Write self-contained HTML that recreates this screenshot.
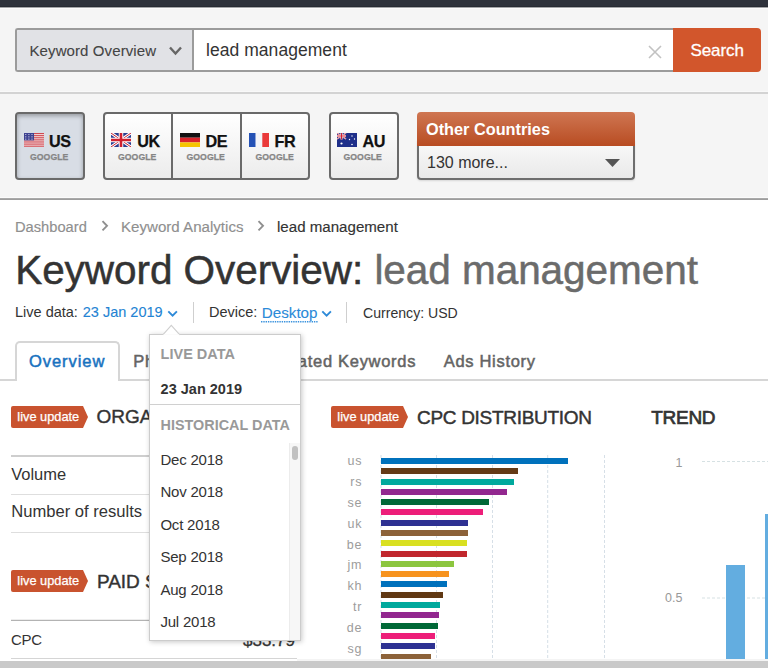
<!DOCTYPE html>
<html><head><meta charset="utf-8"><style>
html,body{margin:0;padding:0;width:768px;height:668px;overflow:hidden;background:#fff;font-family:"Liberation Sans", sans-serif;}
.b{position:absolute;}
.t{position:absolute;white-space:nowrap;line-height:1;font-family:"Liberation Sans", sans-serif;}
svg{display:block;}
</style></head><body>
<div class="b" style="left:0px;top:0px;width:768px;height:7px;background:#2e323b;"></div>
<div class="b" style="left:0px;top:6px;width:768px;height:1px;background:#272b33;"></div>
<div class="b" style="left:0px;top:7px;width:768px;height:86px;background:#f5f5f5;"></div>
<div class="b" style="left:0px;top:7px;width:768px;height:1px;background:#a4a5a8;"></div>
<div class="b" style="left:0px;top:8px;width:768px;height:1px;background:#fbfbfb;"></div>
<div class="b" style="left:0px;top:91px;width:768px;height:1px;background:#f9f9f9;"></div>
<div class="b" style="left:0px;top:92px;width:768px;height:2px;background:#d3d3d3;"></div>
<div class="b" style="left:15px;top:28px;width:659px;height:44px;background:#fff;border:2px solid #9b9b9b;border-right:none;border-radius:3px 0 0 3px;box-sizing:border-box;"></div>
<div class="b" style="left:17px;top:30px;width:175px;height:40px;background:#e1e2e6;border-radius:2px 0 0 2px;"></div>
<div class="b" style="left:192px;top:30px;width:2px;height:40px;background:#9b9b9b;"></div>
<div class="b" style="left:673px;top:28px;width:88px;height:44px;background:#d2562c;border-radius:0 4px 4px 0;"></div>
<div class="t" style="left:29.5px;top:42.70px;font-size:15px;color:#444;font-weight:400;letter-spacing:0.1px;-webkit-text-stroke:0.1px #444;">Keyword Overview</div>
<svg class="b" style="left:168px;top:45px" width="16" height="12" viewBox="0 0 16 12"><path d="M2 2.5 L7.5 8.5 L13 2.5" fill="none" stroke="#666" stroke-width="2.4"/></svg>
<div class="t" style="left:206px;top:41.58px;font-size:17.5px;color:#333;font-weight:400;letter-spacing:0.05px;">lead management</div>
<svg class="b" style="left:647px;top:44px" width="16" height="16" viewBox="0 0 16 16"><path d="M2 2 L14 14 M14 2 L2 14" fill="none" stroke="#c2c2c2" stroke-width="1.6"/></svg>
<div class="t" style="left:690.5px;top:42.11px;font-size:17px;color:#fff;font-weight:400;letter-spacing:-0.1px;-webkit-text-stroke:0.3px #fff;">Search</div>
<div class="b" style="left:0px;top:94px;width:768px;height:104px;background:#f5f5f5;"></div>
<div class="b" style="left:0px;top:197px;width:768px;height:1px;background:#fbfbfb;"></div>
<div class="b" style="left:0px;top:198px;width:768px;height:1px;background:#a9a9a9;"></div>
<div class="b" style="left:0px;top:199px;width:768px;height:1px;background:#9d9d9d;"></div>
<div class="b" style="left:15px;top:112px;width:70px;height:68px;background:#d8dde5;box-shadow:inset 0 2px 4px rgba(0,0,0,0.3);border:2px solid #6a6a6a;box-sizing:border-box;border-radius:4px;"></div>
<div class="b" style="left:24px;top:133px"><svg width="20" height="14" viewBox="0 0 20 14"><rect width="20" height="14" fill="#f6e9ea"/><rect x="0" y="0.00" width="20" height="1.15" fill="#cf4850"/><rect x="0" y="2.10" width="20" height="1.15" fill="#cf4850"/><rect x="0" y="4.20" width="20" height="1.15" fill="#cf4850"/><rect x="0" y="6.30" width="20" height="1.15" fill="#cf4850"/><rect x="0" y="8.40" width="20" height="1.15" fill="#cf4850"/><rect x="0" y="10.50" width="20" height="1.15" fill="#cf4850"/><rect x="0" y="12.60" width="20" height="1.15" fill="#cf4850"/><rect x="0" y="0" width="10" height="7.4" fill="#3f4392"/><circle cx="1.80" cy="1.50" r="0.6" fill="#e6e6f4"/><circle cx="4.90" cy="1.50" r="0.6" fill="#e6e6f4"/><circle cx="8.00" cy="1.50" r="0.6" fill="#e6e6f4"/><circle cx="1.80" cy="3.80" r="0.6" fill="#e6e6f4"/><circle cx="4.90" cy="3.80" r="0.6" fill="#e6e6f4"/><circle cx="8.00" cy="3.80" r="0.6" fill="#e6e6f4"/><circle cx="1.80" cy="6.10" r="0.6" fill="#e6e6f4"/><circle cx="4.90" cy="6.10" r="0.6" fill="#e6e6f4"/><circle cx="8.00" cy="6.10" r="0.6" fill="#e6e6f4"/></svg></div>
<div class="t" style="left:49px;top:132.58px;font-size:16.2px;color:#111;font-weight:700;letter-spacing:-0.4px;-webkit-text-stroke:0.25px #111;">US</div>
<div class="t" style="left:30px;top:153.13px;font-size:8.7px;color:#858585;font-weight:700;letter-spacing:0.05px;-webkit-text-stroke:0.25px #858585;">GOOGLE</div>
<div class="b" style="left:103px;top:112px;width:207px;height:68px;background:linear-gradient(#ffffff,#ececec);border:2px solid #6a6a6a;box-sizing:border-box;border-radius:4px;"></div>
<div class="b" style="left:171px;top:113px;width:2px;height:66px;background:#6a6a6a;"></div>
<div class="b" style="left:240px;top:113px;width:2px;height:66px;background:#6a6a6a;"></div>
<div class="b" style="left:111px;top:133px"><svg width="20" height="14" viewBox="0 0 20 14"><rect width="20" height="14" fill="#2c3d8f"/><path d="M0 0 L20 14 M20 0 L0 14" stroke="#fff" stroke-width="3"/><path d="M0 0 L20 14 M20 0 L0 14" stroke="#c8202f" stroke-width="1"/><path d="M10 0 V14 M0 7 H20" stroke="#fff" stroke-width="4.5"/><path d="M10 0 V14 M0 7 H20" stroke="#d0202f" stroke-width="2.6"/></svg></div>
<div class="t" style="left:137.3px;top:132.58px;font-size:16.2px;color:#111;font-weight:700;letter-spacing:-0.4px;-webkit-text-stroke:0.25px #111;">UK</div>
<div class="t" style="left:118px;top:153.13px;font-size:8.7px;color:#858585;font-weight:700;letter-spacing:0.05px;-webkit-text-stroke:0.25px #858585;">GOOGLE</div>
<div class="b" style="left:180px;top:133px"><svg width="20" height="14" viewBox="0 0 20 14"><rect y="0" width="20" height="4.7" fill="#111"/><rect y="4.7" width="20" height="4.7" fill="#d8232a"/><rect y="9.4" width="20" height="4.6" fill="#f5c400"/></svg></div>
<div class="t" style="left:205.5px;top:132.58px;font-size:16.2px;color:#111;font-weight:700;letter-spacing:-0.4px;-webkit-text-stroke:0.25px #111;">DE</div>
<div class="t" style="left:186.5px;top:153.13px;font-size:8.7px;color:#858585;font-weight:700;letter-spacing:0.05px;-webkit-text-stroke:0.25px #858585;">GOOGLE</div>
<div class="b" style="left:249px;top:133px"><svg width="20" height="14" viewBox="0 0 20 14"><rect x="0" width="6.7" height="14" fill="#2451b5"/><rect x="6.7" width="6.6" height="14" fill="#f4f4f8"/><rect x="13.3" width="6.7" height="14" fill="#ea3a3a"/></svg></div>
<div class="t" style="left:274.5px;top:132.58px;font-size:16.2px;color:#111;font-weight:700;letter-spacing:-0.4px;-webkit-text-stroke:0.25px #111;">FR</div>
<div class="t" style="left:255.5px;top:153.13px;font-size:8.7px;color:#858585;font-weight:700;letter-spacing:0.05px;-webkit-text-stroke:0.25px #858585;">GOOGLE</div>
<div class="b" style="left:329px;top:112px;width:70px;height:68px;background:linear-gradient(#ffffff,#ececec);border:2px solid #6a6a6a;box-sizing:border-box;border-radius:4px;"></div>
<div class="b" style="left:337px;top:133px"><svg width="20" height="14" viewBox="0 0 20 14"><rect width="20" height="14" fill="#1f2f8a"/><path d="M0 0 L9 6 M9 0 L0 6" stroke="#fff" stroke-width="1.4"/><path d="M0 0 L9 6 M9 0 L0 6" stroke="#d02030" stroke-width="0.6"/><path d="M4.5 0 V6.5 M0 3 H9" stroke="#fff" stroke-width="2"/><path d="M4.5 0 V6.5 M0 3 H9" stroke="#d02030" stroke-width="1.1"/><circle cx="4.5" cy="10.5" r="1.1" fill="#fff"/><circle cx="15" cy="3" r="0.7" fill="#fff"/><circle cx="12.5" cy="6.5" r="0.7" fill="#fff"/><circle cx="17.5" cy="6" r="0.7" fill="#fff"/><circle cx="15" cy="11.5" r="0.8" fill="#fff"/></svg></div>
<div class="t" style="left:362.5px;top:132.58px;font-size:16.2px;color:#111;font-weight:700;letter-spacing:-0.4px;-webkit-text-stroke:0.25px #111;">AU</div>
<div class="t" style="left:343.5px;top:153.13px;font-size:8.7px;color:#858585;font-weight:700;letter-spacing:0.05px;-webkit-text-stroke:0.25px #858585;">GOOGLE</div>
<div class="b" style="left:417px;top:140px;width:218px;height:40px;background:linear-gradient(#fafafa,#e9e9e9);border:2px solid #6e6e6e;border-top:none;box-sizing:border-box;border-radius:0 0 4px 4px;box-shadow:0 1px 2px rgba(0,0,0,0.12);"></div>
<div class="b" style="left:417px;top:112px;width:218px;height:34px;background:linear-gradient(#cf7652,#b84c22);border-radius:4px 4px 0 0;"></div>
<div class="t" style="left:426px;top:120.60px;font-size:16.3px;color:#fff;font-weight:700;">Other Countries</div>
<div class="t" style="left:427px;top:155.15px;font-size:16px;color:#333;font-weight:400;">130 more...</div>
<svg class="b" style="left:604px;top:158px" width="17" height="10" viewBox="0 0 17 10"><path d="M1 1 H16 L8.5 9 Z" fill="#555"/></svg>
<div class="t" style="left:15px;top:219.55px;font-size:14.7px;color:#8f8f8f;font-weight:400;-webkit-text-stroke:0.15px #8f8f8f;">Dashboard</div>
<svg class="b" style="left:100px;top:219px" width="10" height="14" viewBox="0 0 10 14"><path d="M2.5 2.2 L7 6.8 L2.5 11.4" fill="none" stroke="#8f8f8f" stroke-width="1.9"/></svg>
<div class="t" style="left:121px;top:219.01px;font-size:15.1px;color:#8f8f8f;font-weight:400;-webkit-text-stroke:0.15px #8f8f8f;">Keyword Analytics</div>
<svg class="b" style="left:256px;top:219px" width="10" height="14" viewBox="0 0 10 14"><path d="M2.5 2.2 L7 6.8 L2.5 11.4" fill="none" stroke="#8f8f8f" stroke-width="1.9"/></svg>
<div class="t" style="left:277px;top:219.01px;font-size:15.1px;color:#333;font-weight:400;-webkit-text-stroke:0.15px #333;">lead management</div>
<div class="t" style="left:15.2px;top:249.61px;font-size:40.5px;color:#333;font-weight:400;letter-spacing:-0.05px;-webkit-text-stroke:0.5px #333;">Keyword Overview: <span style="color:#6b6b6b;-webkit-text-stroke:0.5px #6b6b6b">lead management</span></div>
<div class="t" style="left:15px;top:305.22px;font-size:14.5px;color:#333;font-weight:400;">Live data:</div>
<div class="t" style="left:82.8px;top:305.22px;font-size:14.5px;color:#2383d3;font-weight:400;-webkit-text-stroke:0.1px #2383d3;">23 Jan 2019</div>
<svg class="b" style="left:167px;top:309px" width="12" height="10" viewBox="0 0 12 10"><path d="M1.3 2.3 L5.6 6.6 L9.9 2.3" fill="none" stroke="#2e8ad8" stroke-width="1.9"/></svg>
<div class="b" style="left:193px;top:302px;width:1px;height:21px;background:#cfcfcf;"></div>
<div class="t" style="left:209px;top:305.22px;font-size:14.5px;color:#333;font-weight:400;">Device:</div>
<div class="t" style="left:261.8px;top:304.63px;font-size:15.2px;color:#2b8ad8;font-weight:400;-webkit-text-stroke:0.1px #2b8ad8;">Desktop</div>
<svg class="b" style="left:260px;top:320px" width="62" height="3"><line x1="1" y1="1.8" x2="58" y2="1.8" stroke="#3b93de" stroke-width="1.4" stroke-dasharray="1.4 0.9"/></svg>
<svg class="b" style="left:321px;top:309px" width="12" height="10" viewBox="0 0 12 10"><path d="M1.3 2.3 L5.6 6.6 L9.9 2.3" fill="none" stroke="#2e8ad8" stroke-width="1.9"/></svg>
<div class="b" style="left:346px;top:302px;width:1px;height:21px;background:#cfcfcf;"></div>
<div class="t" style="left:363px;top:305.56px;font-size:14.1px;color:#333;font-weight:400;">Currency: USD</div>
<div class="b" style="left:0px;top:379px;width:768px;height:2px;background:#d6d6d6;"></div>
<div class="b" style="left:15px;top:341px;width:104.5px;height:40px;background:#fff;border:2px solid #d6d6d6;border-bottom:none;border-radius:5px 5px 0 0;box-sizing:border-box;"></div>
<div class="t" style="left:29px;top:352.63px;font-size:16.5px;color:#1872bf;font-weight:400;letter-spacing:0.95px;-webkit-text-stroke:0.5px #1872bf;">Overview</div>
<div class="t" style="left:133.3px;top:352.63px;font-size:16.5px;color:#646464;font-weight:400;letter-spacing:0.7px;-webkit-text-stroke:0.5px #646464;">Phrase Match</div>
<div class="t" style="left:271px;top:352.63px;font-size:16.5px;color:#646464;font-weight:400;letter-spacing:0.7px;-webkit-text-stroke:0.5px #646464;">Related Keywords</div>
<div class="t" style="left:443.7px;top:352.63px;font-size:16.5px;color:#646464;font-weight:400;letter-spacing:0.7px;-webkit-text-stroke:0.5px #646464;">Ads History</div>
<svg class="b" style="left:11px;top:406px" width="78" height="22" viewBox="0 0 78 22"><path d="M2 0 H72 L77 11 L72 22 H2 Q0 22 0 20 V2 Q0 0 2 0 Z" fill="#c9532f"/></svg>
<div class="t" style="left:17.3px;top:410.56px;font-size:12.8px;color:#fff;font-weight:400;-webkit-text-stroke:0.25px #fff;">live update</div>
<div class="t" style="left:96.5px;top:407.11px;font-size:19px;color:#333;font-weight:400;-webkit-text-stroke:0.4px #333;">ORGANIC SEARCH</div>
<div class="b" style="left:11px;top:455px;width:286px;height:2px;background:#cecece;"></div>
<div class="t" style="left:11.2px;top:465.83px;font-size:16.5px;color:#333;font-weight:400;">Volume</div>
<div class="b" style="left:11px;top:494px;width:286px;height:1px;background:#dedede;"></div>
<div class="t" style="left:11.2px;top:503.84px;font-size:16.6px;color:#333;font-weight:400;">Number of results</div>
<div class="b" style="left:11px;top:532px;width:286px;height:1px;background:#dedede;"></div>
<svg class="b" style="left:11px;top:570px" width="78" height="22" viewBox="0 0 78 22"><path d="M2 0 H72 L77 11 L72 22 H2 Q0 22 0 20 V2 Q0 0 2 0 Z" fill="#c9532f"/></svg>
<div class="t" style="left:17.3px;top:574.56px;font-size:12.8px;color:#fff;font-weight:400;-webkit-text-stroke:0.25px #fff;">live update</div>
<div class="t" style="left:96.9px;top:571.81px;font-size:19px;color:#333;font-weight:400;-webkit-text-stroke:0.4px #333;">PAID SEARCH</div>
<div class="b" style="left:11px;top:619px;width:286px;height:1px;background:#ededed;"></div>
<div class="b" style="left:11px;top:620px;width:286px;height:1px;background:#b3b3b3;"></div>
<div class="t" style="left:11px;top:631.70px;font-size:15px;color:#333;font-weight:400;letter-spacing:-0.3px;">CPC</div>
<div class="t" style="right:473px;top:631.61px;font-size:17px;color:#333;font-weight:400;-webkit-text-stroke:0.3px #333;">$33.79</div>
<div class="b" style="left:11px;top:658px;width:286px;height:1px;background:#d5d5d5;"></div>
<svg class="b" style="left:331px;top:406px" width="78" height="22" viewBox="0 0 78 22"><path d="M2 0 H72 L77 11 L72 22 H2 Q0 22 0 20 V2 Q0 0 2 0 Z" fill="#c9532f"/></svg>
<div class="t" style="left:337.3px;top:410.56px;font-size:12.8px;color:#fff;font-weight:400;-webkit-text-stroke:0.25px #fff;">live update</div>
<div class="t" style="left:417px;top:407.51px;font-size:19px;color:#333;font-weight:400;letter-spacing:-0.3px;-webkit-text-stroke:0.45px #333;">CPC DISTRIBUTION</div>
<div class="t" style="left:651.3px;top:408.11px;font-size:19px;color:#333;font-weight:400;letter-spacing:-0.3px;-webkit-text-stroke:0.7px #333;">TREND</div>
<svg class="b" style="left:0;top:0" width="768" height="668"><line x1="381.0" y1="455" x2="381.0" y2="661" stroke="#d6dfe7" stroke-width="1" stroke-dasharray="3 2"/><line x1="436.5" y1="455" x2="436.5" y2="661" stroke="#d6dfe7" stroke-width="1" stroke-dasharray="3 2"/><line x1="492.5" y1="455" x2="492.5" y2="661" stroke="#d6dfe7" stroke-width="1" stroke-dasharray="3 2"/><line x1="547.7" y1="455" x2="547.7" y2="661" stroke="#d6dfe7" stroke-width="1" stroke-dasharray="3 2"/><line x1="604.5" y1="455" x2="604.5" y2="661" stroke="#d6dfe7" stroke-width="1" stroke-dasharray="3 2"/><line x1="702" y1="461.5" x2="768" y2="461.5" stroke="#d6e1e3" stroke-width="1" stroke-dasharray="3 2"/><line x1="702" y1="598" x2="768" y2="598" stroke="#d6e1e3" stroke-width="1" stroke-dasharray="3 2"/></svg>
<div class="b" style="left:381px;top:458.0px;width:186.7px;height:6px;background:#0071bc;"></div>
<div class="b" style="left:381px;top:468.29px;width:136.7px;height:6px;background:#643a16;"></div>
<div class="b" style="left:381px;top:478.58px;width:133px;height:6px;background:#00a99d;"></div>
<div class="b" style="left:381px;top:488.87px;width:125.5px;height:6px;background:#92278f;"></div>
<div class="b" style="left:381px;top:499.16px;width:108px;height:6px;background:#006837;"></div>
<div class="b" style="left:381px;top:509.45px;width:101.8px;height:6px;background:#ed1e79;"></div>
<div class="b" style="left:381px;top:519.74px;width:87px;height:6px;background:#2e3192;"></div>
<div class="b" style="left:381px;top:530.03px;width:87px;height:6px;background:#8c6239;"></div>
<div class="b" style="left:381px;top:540.32px;width:85.6px;height:6px;background:#d9e021;"></div>
<div class="b" style="left:381px;top:550.61px;width:85.7px;height:6px;background:#c1272d;"></div>
<div class="b" style="left:381px;top:560.9px;width:73.2px;height:6px;background:#8cc63f;"></div>
<div class="b" style="left:381px;top:571.19px;width:68.3px;height:6px;background:#f7931e;"></div>
<div class="b" style="left:381px;top:581.48px;width:65.8px;height:6px;background:#0071bc;"></div>
<div class="b" style="left:381px;top:591.77px;width:61.9px;height:6px;background:#603813;"></div>
<div class="b" style="left:381px;top:602.06px;width:59.3px;height:6px;background:#00a99d;"></div>
<div class="b" style="left:381px;top:612.35px;width:58.3px;height:6px;background:#92278f;"></div>
<div class="b" style="left:381px;top:622.64px;width:57px;height:6px;background:#006837;"></div>
<div class="b" style="left:381px;top:632.93px;width:54.4px;height:6px;background:#ed1e79;"></div>
<div class="b" style="left:381px;top:643.22px;width:54.4px;height:6px;background:#2e3192;"></div>
<div class="b" style="left:381px;top:653.51px;width:49.5px;height:6px;background:#8c6239;"></div>
<div class="t" style="right:405.7px;top:455.42px;font-size:12.5px;color:#9c9c9c;font-weight:400;letter-spacing:0.8px;">us</div>
<div class="t" style="right:405.7px;top:476.22px;font-size:12.5px;color:#9c9c9c;font-weight:400;letter-spacing:0.8px;">rs</div>
<div class="t" style="right:405.7px;top:497.02px;font-size:12.5px;color:#9c9c9c;font-weight:400;letter-spacing:0.8px;">se</div>
<div class="t" style="right:405.7px;top:517.82px;font-size:12.5px;color:#9c9c9c;font-weight:400;letter-spacing:0.8px;">uk</div>
<div class="t" style="right:405.7px;top:538.62px;font-size:12.5px;color:#9c9c9c;font-weight:400;letter-spacing:0.8px;">be</div>
<div class="t" style="right:405.7px;top:559.42px;font-size:12.5px;color:#9c9c9c;font-weight:400;letter-spacing:0.8px;">jm</div>
<div class="t" style="right:405.7px;top:580.22px;font-size:12.5px;color:#9c9c9c;font-weight:400;letter-spacing:0.8px;">kh</div>
<div class="t" style="right:405.7px;top:601.02px;font-size:12.5px;color:#9c9c9c;font-weight:400;letter-spacing:0.8px;">tr</div>
<div class="t" style="right:405.7px;top:621.82px;font-size:12.5px;color:#9c9c9c;font-weight:400;letter-spacing:0.8px;">de</div>
<div class="t" style="right:405.7px;top:642.62px;font-size:12.5px;color:#9c9c9c;font-weight:400;letter-spacing:0.8px;">sg</div>
<div class="t" style="right:85.5px;top:456.92px;font-size:12.5px;color:#999;font-weight:400;">1</div>
<div class="t" style="right:85.5px;top:592.22px;font-size:12.5px;color:#999;font-weight:400;">0.5</div>
<div class="b" style="left:726px;top:565px;width:18.5px;height:96px;background:#63ade0;"></div>
<div class="b" style="left:765.3px;top:513.5px;width:3px;height:148px;background:#63ade0;"></div>
<div class="b" style="left:149px;top:334px;width:152px;height:307px;background:#fff;border:1px solid #cccccc;box-sizing:border-box;box-shadow:1px 1px 5px rgba(0,0,0,0.22);"></div>
<svg class="b" style="left:161px;top:324px" width="20" height="12" viewBox="0 0 20 12"><path d="M1.8 10.8 L10.3 1.3 L18.8 10.8" fill="#fff" stroke="#cfcfcf" stroke-width="1.1"/><rect x="2.5" y="10.3" width="15.6" height="1.7" fill="#fff"/></svg>
<div class="t" style="left:160.6px;top:346.82px;font-size:14.5px;color:#999;font-weight:700;">LIVE DATA</div>
<div class="t" style="left:160.6px;top:381.52px;font-size:14.5px;color:#333;font-weight:700;">23 Jan 2019</div>
<div class="b" style="left:150px;top:404px;width:150px;height:1px;background:#d0d0d0;"></div>
<div class="t" style="left:160.6px;top:417.51px;font-size:14.4px;color:#999;font-weight:700;">HISTORICAL DATA</div>
<div class="b" style="left:289px;top:443px;width:11px;height:197px;background:#f7f7f7;border-left:1px solid #ececec;box-sizing:border-box;"></div>
<div class="b" style="left:292px;top:446px;width:6px;height:14px;background:#c1c1c1;border-radius:3px;"></div>
<div class="t" style="left:160.4px;top:451.70px;font-size:15px;color:#333;font-weight:400;letter-spacing:-0.2px;">Dec 2018</div>
<div class="t" style="left:160.4px;top:484.20px;font-size:15px;color:#333;font-weight:400;letter-spacing:-0.2px;">Nov 2018</div>
<div class="t" style="left:160.4px;top:516.70px;font-size:15px;color:#333;font-weight:400;letter-spacing:-0.2px;">Oct 2018</div>
<div class="t" style="left:160.4px;top:549.20px;font-size:15px;color:#333;font-weight:400;letter-spacing:-0.2px;">Sep 2018</div>
<div class="t" style="left:160.4px;top:581.70px;font-size:15px;color:#333;font-weight:400;letter-spacing:-0.2px;">Aug 2018</div>
<div class="t" style="left:160.4px;top:614.20px;font-size:15px;color:#333;font-weight:400;letter-spacing:-0.2px;">Jul 2018</div>
<div class="b" style="left:297px;top:659px;width:471px;height:2px;background:#f4f4f4;"></div>
<div class="b" style="left:0px;top:661px;width:768px;height:7px;background:#c9c9c9;"></div>
</body></html>
